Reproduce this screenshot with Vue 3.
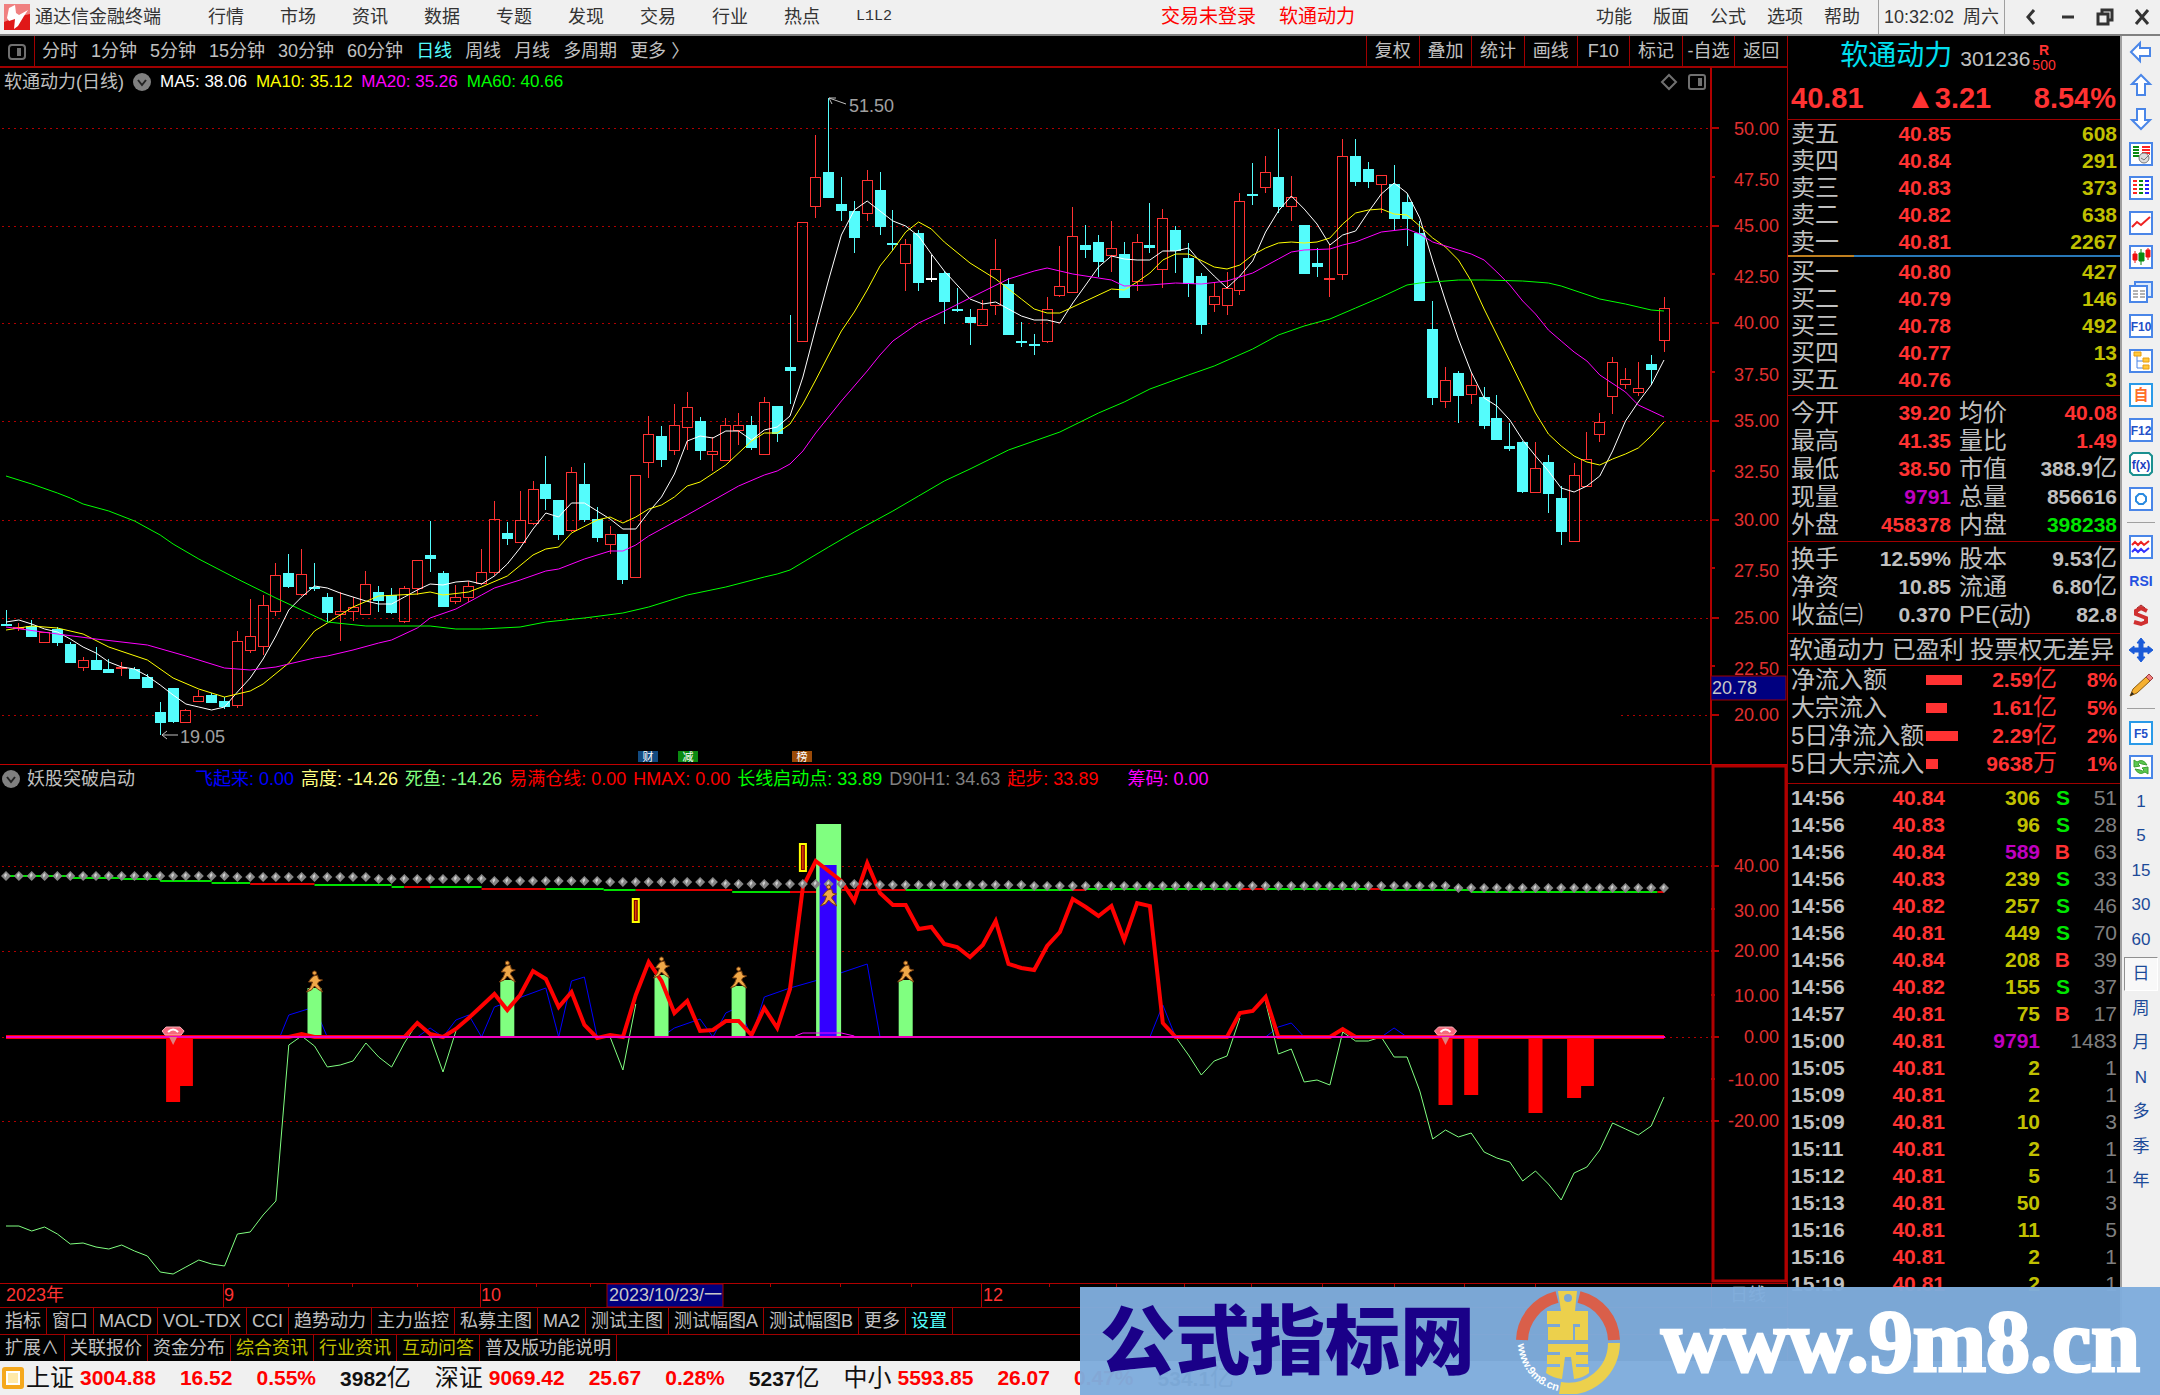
<template>
  <div class="terminal">
    <header class="titlebar">
      <svg class="brand" viewBox="0 0 26 26">
        <rect width="26" height="26" fill="#e01818" />
        <path d="M0 0H26V10L12 13L0 18Z" fill="#f08080" />
        <path d="M11 1L5 4L3 14L5 17L11 15L10 25L14 22L20 12L24 6L15 11L12 9Z" fill="#fff" />
      </svg>
      <span class="app-name">通达信金融终端</span>
      <nav class="menu">
        <button v-for="m in mainMenu" :key="m">{{ m }}</button>
        <button class="mono">L1L2</button>
      </nav>
      <div class="login"><span>交易未登录</span><span>软通动力</span></div>
      <nav class="menu tools-menu">
        <button v-for="m in toolMenu" :key="m">{{ m }}</button>
      </nav>
      <div class="clock"><span>10:32:02</span><span>周六</span></div>
      <div class="win-buttons">
        <button aria-label="back"><svg viewBox="0 0 20 20"><path d="M13 3L7 10L13 17" /></svg></button>
        <button aria-label="minimize"><svg viewBox="0 0 20 20"><path d="M4 10H16" /></svg></button>
        <button aria-label="restore"><svg viewBox="0 0 20 20"><path d="M3 7H13V17H3ZM7 7V3H17V13H13" /></svg></button>
        <button aria-label="close"><svg viewBox="0 0 20 20"><path d="M4 3L16 17M16 3L4 17" /></svg></button>
      </div>
    </header>

    <div class="body">
      <main class="charts">
        <div class="period-bar">
          <button class="panel-toggle" aria-label="panel">
            <svg viewBox="0 0 20 20"><rect x="2" y="3" width="16" height="14" rx="3" /><path d="M12 6V14" class="thick" /></svg>
          </button>
          <div class="periods">
            <button v-for="p in periods" :key="p" :class="{ active: p === '日线' }">{{ p }}</button>
          </div>
          <div class="actions">
            <button v-for="a in actions" :key="a">{{ a }}</button>
          </div>
        </div>

        <section class="pane">
          <div class="legend">
            <span class="grey">软通动力(日线)</span>
            <svg class="drop" viewBox="0 0 18 18"><circle cx="9" cy="9" r="9" /><path d="M5 7L9 12L13 7" /></svg>
            <span class="ma" v-for="m in maLegend" :key="m.text" :class="m.cls">{{ m.text }}</span>
            <div class="corner">
              <svg viewBox="0 0 20 20"><path d="M10 3L17 10L10 17L3 10Z" /></svg>
              <svg viewBox="0 0 20 20"><rect x="2" y="3" width="16" height="14" rx="2" /><path d="M13 6V14" class="thick" /></svg>
            </div>
          </div>
          <svg class="plot" viewBox="0 0 1787 697">
            <g class="grid">
              <line v-for="g in priceGrid.slice(0, 6)" :key="g" x1="2" x2="1710" :y1="py(g)" :y2="py(g)" />
              <line x1="2" x2="538" :y1="py(1422)" :y2="py(1422)" />
              <line x1="1621" x2="1710" :y1="py(1422)" :y2="py(1422)" />
            </g>
            <g class="axis">
              <path d="M1711 0V697" />
              <path v-for="g in priceGrid" :key="g" :d="`M1711 ${py(g)}h8`" />
              <path v-for="g in priceGrid.slice(1)" :key="'h' + g" :d="`M1711 ${py(g - 110)}h4`" />
            </g>
            <g class="axis-text">
              <text v-for="l in priceLabels" :key="l[0]" x="1779" :y="py(l[1]) + 6">{{ l[0] }}</text>
            </g>
            <g v-for="(c, i) in candles" :key="i" :class="['candle', c[0]]">
              <path :d="wick(c, i)" />
              <rect :x="xi(i) - 5" :y="py(c[2])" width="10" :height="Math.max(1, py(c[3]) - py(c[2]))" />
            </g>
            <polyline class="line white" :points="pts(ma5, py)" />
            <polyline class="line yellow" :points="pts(ma10, py)" />
            <polyline class="line magenta" :points="pts(ma20, py)" />
            <polyline class="line green" :points="pts(ma60, py)" />
            <g class="note">
              <path d="M829 31L846 37M829 31H836M829 31L832 37" />
              <text x="849" y="45">51.50</text>
              <path d="M162 668H178M162 668L167 664M162 668L167 672" />
              <text x="180" y="676">19.05</text>
            </g>
            <g class="tag" v-for="t in tags" :key="t.text">
              <rect :x="t.x" y="684" width="20" height="11" :fill="t.fill" />
              <text :x="t.x + 10" y="694">{{ t.text }}</text>
            </g>
            <g class="cursor">
              <rect x="1711" y="609" width="75" height="24" />
              <text x="1712" y="627">20.78</text>
            </g>
          </svg>
        </section>

        <section class="pane">
          <div class="legend sub">
            <svg class="drop" viewBox="0 0 18 18"><circle cx="9" cy="9" r="9" /><path d="M5 7L9 12L13 7" /></svg>
            <span class="light sub-name">妖股突破启动</span>
            <span v-for="s in subLegend" :key="s.text" :class="s.cls">{{ s.text }}</span>
          </div>
          <svg class="plot" viewBox="0 0 1787 518">
            <g class="grid">
              <line v-for="g in [350, 589, 829, 1064]" :key="g" x1="2" x2="1710" :y1="sy(g)" :y2="sy(g)" />
            </g>
            <g class="axis">
              <path v-for="g in [350, 589, 829, 1064]" :key="g" :d="`M1711 ${sy(g)}h8`" />
              <path v-for="g in [470, 711, 946]" :key="g" :d="`M1711 ${sy(g)}h4`" />
              <rect class="frame" x="1713" y="1" width="73" height="515" />
            </g>
            <g class="axis-text">
              <text v-for="l in subLabels" :key="l[0]" x="1779" :y="sy(l[1]) + 6">{{ l[0] }}</text>
            </g>
            <path v-for="(s, i) in trend" :key="i" :class="['trend', s[3]]" :d="`M${xi(s[0])} ${sy(s[2])}H${xi(s[1])}`" />
            <polyline v-for="(b, i) in blueRuns" :key="'b' + i" class="thin blue" :points="pts(b, sy)" />
            <polyline v-for="(g, i) in greenRuns" :key="'g' + i" class="thin lime" :points="pts(g, sy)" />
            <rect v-for="b in greenBars" :key="b[0]" :x="xi(b[0]) - b[2] / 2" :y="sy(b[1])" :width="b[2]" :height="sy(829) - sy(b[1])" fill="#80ff80" />
            <rect :x="xi(64) - 9" :y="sy(348)" width="17" :height="sy(829) - sy(348)" fill="#3300ff" />
            <polyline class="bold" :points="pts(power, sy)" />
            <rect v-for="b in redBars" :key="'r' + b[0]" :x="xi(b[0]) - 7" :y="sy(829)" width="14" :height="sy(b[1]) - sy(829)" fill="#f00" />
            <path class="base" :d="`M6 ${sy(829)}H1665`" />
            <polyline class="thin magenta" :points="pts([[61.4, 827], [62, 817], [65, 817], [66, 827]], sy)" />
            <g v-for="i in 130" :key="'d' + i" :transform="`translate(${xi(i - 1)} ${sy(pearl(i - 1))})`">
              <path d="M0 -5L5 0L0 5L-5 0Z" fill="#858585" />
              <path d="M-2 -1L0 -3L1 -1L-1 2Z" fill="#d0d0d0" />
            </g>
            <g v-for="y in yellowBars" :key="'y' + y[0]" class="bolt">
              <rect :x="xi(y[0]) - 3" :y="sy(y[1])" width="6" :height="sy(y[2]) - sy(y[1])" />
              <path :d="`M${xi(y[0])} ${sy(y[1]) + 2}V${sy(y[2]) - 2}`" />
            </g>
            <g v-for="r in runners" :key="'p' + r[0]" class="runner" :transform="`translate(${xi(r[0])} ${sy(r[1])})`">
              <circle cx="0" cy="3" r="2" />
              <path d="M-1 6L3 5L4 9L8 10L4 12L3 14L6 18L8 22L3 19L0 16L-3 20L-8 22L-4 17L-2 12L-6 12L-4 9Z" />
            </g>
            <g v-for="i in [13, 112]" :key="'m' + i" :transform="`translate(${xi(i)} ${sy(802)})`">
              <path d="M-11 4L-7 0H7L11 4L8 8H-8Z" fill="#f56a7c" stroke="#ffb0b8" />
              <path d="M-5 5Q0 0 5 5" fill="none" stroke="#fff" stroke-width="2" />
              <path d="M-4 10H4L0 18Z" fill="#e08080" />
            </g>
          </svg>
        </section>

        <svg class="plot dates" viewBox="0 0 1787 24">
          <path class="tick" d="M0 0H1787" />
          <path v-for="t in minorTicks" :key="t" class="tick" :d="`M${t} 0v4`" />
          <path v-for="t in [223, 480, 981, 1711]" :key="t" class="tick" :d="`M${t} 0v24`" />
          <text x="6" y="18">2023年</text>
          <text x="224" y="18">9</text>
          <text x="481" y="18">10</text>
          <text x="983" y="18">12</text>
          <g class="cursor">
            <rect x="607" y="1" width="116" height="23" />
            <text x="609" y="18">2023/10/23/一</text>
          </g>
          <text class="grey-text" x="1730" y="18">日线</text>
        </svg>

        <nav class="tabs">
          <button v-for="t in tabs" :key="t" :class="{ active: t === '设置' }">{{ t }}</button>
        </nav>
        <nav class="tabs">
          <button v-for="t in extTabs" :key="t" :class="{ gold: goldTabs.includes(t) }">{{ t }}</button>
        </nav>
      </main>

      <aside class="quote">
        <div class="stock">
          <h1>软通动力</h1>
          <span class="code">301236</span>
          <span class="marks"><b>R</b><i>500</i></span>
        </div>
        <div class="last"><span>40.81</span><span>▲3.21</span><span>8.54%</span></div>

        <table class="book">
          <tbody>
            <tr v-for="r in asks" :key="r[0]"><th>{{ r[0] }}</th><td class="r">{{ r[1] }}</td><td class="y">{{ r[2] }}</td></tr>
          </tbody>
        </table>
        <div class="ratio"><span></span></div>
        <table class="book bids">
          <tbody>
            <tr v-for="r in bids" :key="r[0]"><th>{{ r[0] }}</th><td class="r">{{ r[1] }}</td><td class="y">{{ r[2] }}</td></tr>
          </tbody>
        </table>

        <table class="stats" v-for="(block, n) in stats" :key="n">
          <tbody>
            <tr v-for="r in block" :key="r[0]">
              <th>{{ r[0] }}</th><td :class="r[2]">{{ r[1] }}</td>
              <th>{{ r[3] }}</th><td :class="r[5]">{{ r[4] }}<span v-if="r[6]" class="unit">{{ r[6] }}</span></td>
            </tr>
          </tbody>
        </table>

        <p class="info">软通动力 已盈利 投票权无差异</p>

        <table class="flows">
          <tbody>
            <tr v-for="f in flows" :key="f.name">
              <th>{{ f.name }}</th>
              <td class="bar-cell"><span class="bar" :style="{ width: f.bar + 'px' }"></span></td>
              <td>{{ f.value }}<span class="unit">{{ f.unit }}</span></td>
              <td>{{ f.pct }}</td>
            </tr>
          </tbody>
        </table>

        <table class="ticks">
          <tbody>
            <tr v-for="(t, i) in ticks" :key="i">
              <th>{{ t[0] }}</th>
              <td class="r">{{ t[1] }}</td>
              <td :class="t[2] === '589' || t[2] === '9791' ? 'm' : 'y'">{{ t[2] }}</td>
              <td :class="t[3] === 'S' ? 'g' : 'r'">{{ t[3] }}</td>
              <td class="n">{{ t[4] }}</td>
            </tr>
          </tbody>
        </table>
      </aside>

      <nav class="side">
        <template v-for="(s, i) in side" :key="i">
          <hr v-if="s === '-'">
          <button v-else-if="s.label" :class="{ active: s.label === '日' }">{{ s.label }}</button>
          <button v-else :aria-label="s.icon">
            <svg viewBox="0 0 24 24">
              <rect v-if="s.box" x="1" y="1" width="22" height="22" fill="#fff" :stroke="s.box" stroke-width="2" />
              <path v-for="(p, k) in s.paths" :key="k" :d="p[0]" :fill="p[1]" :stroke="p[2]" :stroke-width="p[3] || 2" />
              <text v-if="s.text" x="12" y="17" :fill="s.color" :font-size="s.size || 12">{{ s.text }}</text>
            </svg>
          </button>
        </template>
      </nav>
    </div>

    <footer class="status">
      <svg class="coin" viewBox="0 0 22 22"><rect width="22" height="22" rx="3" fill="#f5a81c" /><rect x="5" y="5" width="12" height="12" fill="#ffe9a8" stroke="#fff" stroke-width="2" /></svg>
      <div class="index" v-for="x in indexes" :key="x[0]">
        <span class="nm">{{ x[0] }}</span><b>{{ x[1] }}</b><b>{{ x[2] }}</b><b>{{ x[3] }}</b>
        <span class="amt"><strong>{{ x[4] }}</strong>亿</span>
      </div>
    </footer>

    <div class="banner">
      <span class="site-name">公式指标网</span>
      <svg class="site-logo" viewBox="0 0 104 104">
        <path d="M41 7A46 46 0 0 0 6 50" fill="none" stroke="#d95f4a" stroke-width="12" />
        <path d="M63 7A46 46 0 0 1 98 50" fill="none" stroke="#d95f4a" stroke-width="12" />
        <path d="M98 53A46 46 0 0 1 44 98" fill="none" stroke="#ecd04c" stroke-width="12" />
        <path fill-rule="evenodd" d="M42 1H61L59 21H72V50H59V37H64V34H57V50H32V37H44V34H31V21H45ZM52 4A4 4 0 1 0 52 12A4 4 0 1 0 52 4Z" fill="#ecd04c" />
        <path d="M32 54H72V62H60V65H72V74H60V77H73V83Q67 88 58 89L55 67H49L46 89Q37 88 30 83L31 77H44V74H31V65H44V62H32Z" fill="#ecd04c" />
        <path id="arc" d="M2 54A50 50 0 0 0 42 101" fill="none" />
        <text><textPath href="#arc">www.9m8.cn</textPath></text>
      </svg>
      <a href="#" class="site-url">www.9m8.cn</a>
    </div>
  </div>
</template>

<script setup>
const mainMenu = ['行情', '市场', '资讯', '数据', '专题', '发现', '交易', '行业', '热点']
const toolMenu = ['功能', '版面', '公式', '选项', '帮助']
const periods = ['分时', '1分钟', '5分钟', '15分钟', '30分钟', '60分钟', '日线', '周线', '月线', '多周期', '更多 〉']
const actions = ['复权', '叠加', '统计', '画线', 'F10', '标记', '-自选', '返回']
const tabs = ['指标', '窗口', 'MACD', 'VOL-TDX', 'CCI', '趋势动力', '主力监控', '私募主图', 'MA2', '测试主图', '测试幅图A', '测试幅图B', '更多', '设置']
const extTabs = ['扩展∧', '关联报价', '资金分布', '综合资讯', '行业资讯', '互动问答', '普及版功能说明']
const goldTabs = ['综合资讯', '行业资讯', '互动问答']

const maLegend = [
  { text: 'MA5: 38.06', cls: 'white' },
  { text: 'MA10: 35.12', cls: 'yellow' },
  { text: 'MA20: 35.26', cls: 'magenta' },
  { text: 'MA60: 40.66', cls: 'green' }
]
const subLegend = [
  { text: '飞起来: 0.00', cls: 'blue' },
  { text: '高度: -14.26', cls: 'pale' },
  { text: '死鱼: -14.26', cls: 'lime' },
  { text: '易满仓线: 0.00', cls: 'red' },
  { text: 'HMAX: 0.00', cls: 'red' },
  { text: '长线启动点: 33.89', cls: 'green' },
  { text: 'D90H1: 34.63', cls: 'dim' },
  { text: '起步: 33.89', cls: 'red' },
  { text: '筹码: 0.00', cls: 'magenta last-item' }
]

// bar index -> x, chart units -> y
const xi = i => Math.round(60 + i * 128.53) / 10
const py = v => Math.round(13 + v / 2.24)
const sy = v => Math.round(v / 2.8 - 24)
const pts = (list, y) => list.map(p => `${xi(p[0])},${y(p[1])}`).join(' ')
const wick = (c, i) => `M${xi(i)} ${py(c[1])}V${py(c[2])}M${xi(i)} ${py(c[3])}V${py(c[4])}`

const priceGrid = [108, 327, 545, 764, 985, 1204, 1422]
const priceLabels = [
  ['50.00', 110], ['47.50', 224], ['45.00', 327], ['42.50', 441], ['40.00', 545], ['37.50', 660], ['35.00', 764],
  ['32.50', 878], ['30.00', 985], ['27.50', 1100], ['25.00', 1204], ['22.50', 1320], ['20.00', 1423]
]
const subLabels = [['40.00', 350], ['30.00', 475], ['20.00', 589], ['10.00', 715], ['0.00', 829], ['-10.00', 950], ['-20.00', 1064]]
const minorTicks = [288, 352, 417, 536, 590, 770, 840, 911, 1049, 1116, 1184, 1251, 1322, 1394, 1464, 1535]
const tags = [
  { x: 638, text: '财', fill: '#124a80' },
  { x: 678, text: '减', fill: '#0a8a10' },
  { x: 792, text: '榜', fill: '#9a4a08' }
]

// type, high, body top, body bottom, low
const candles = [
  ['d', 1188, 1219, 1221, 1221], ['u', 1216, 1226, 1228, 1235], ['d', 1209, 1224, 1246, 1246], ['u', 1236, 1236, 1258, 1258],
  ['d', 1226, 1229, 1258, 1268], ['d', 1258, 1263, 1303, 1303], ['u', 1292, 1300, 1315, 1323], ['d', 1269, 1300, 1319, 1319],
  ['d', 1296, 1320, 1326, 1326], ['u', 1303, 1315, 1317, 1336], ['d', 1314, 1319, 1340, 1342], ['d', 1330, 1337, 1360, 1360],
  ['d', 1394, 1416, 1437, 1468], ['d', 1362, 1362, 1436, 1440], ['u', 1408, 1411, 1439, 1440], ['u', 1366, 1379, 1392, 1392],
  ['d', 1374, 1377, 1393, 1396], ['d', 1382, 1390, 1403, 1409], ['u', 1235, 1257, 1399, 1407], ['u', 1162, 1246, 1276, 1283],
  ['u', 1154, 1177, 1268, 1289], ['u', 1081, 1109, 1190, 1201], ['d', 1061, 1105, 1134, 1138], ['u', 1051, 1106, 1151, 1156],
  ['d', 1081, 1135, 1138, 1145], ['d', 1150, 1158, 1191, 1214], ['u', 1146, 1190, 1196, 1256], ['u', 1158, 1181, 1190, 1212],
  ['u', 1099, 1129, 1197, 1198], ['d', 1134, 1146, 1165, 1191], ['d', 1139, 1154, 1191, 1197], ['u', 1133, 1137, 1211, 1216],
  ['u', 1076, 1076, 1139, 1153], ['d', 988, 1065, 1070, 1101], ['d', 1099, 1105, 1178, 1178], ['u', 1132, 1159, 1168, 1174],
  ['u', 1123, 1133, 1158, 1169], ['u', 1051, 1102, 1126, 1131], ['u', 944, 984, 1102, 1111], ['d', 990, 1014, 1026, 1041],
  ['u', 920, 985, 1035, 1036], ['u', 899, 917, 992, 997], ['d', 842, 906, 936, 963], ['d', 940, 940, 1017, 1030],
  ['u', 867, 877, 1009, 1013], ['d', 857, 904, 984, 990], ['d', 957, 983, 1023, 1036], ['u', 998, 1016, 1039, 1062],
  ['d', 1018, 1018, 1118, 1128], ['u', 884, 884, 1113, 1115], ['u', 752, 794, 855, 892], ['d', 775, 798, 849, 868],
  ['u', 725, 772, 828, 841], ['u', 699, 733, 777, 829], ['d', 756, 763, 829, 852], ['u', 800, 830, 837, 876],
  ['u', 758, 773, 851, 852], ['u', 745, 773, 783, 818], ['d', 752, 772, 822, 829], ['u', 709, 722, 837, 841],
  ['d', 731, 731, 791, 811], ['d', 527, 642, 650, 725], ['u', 319, 319, 585, 587], ['u', 124, 218, 283, 310],
  ['d', 40, 207, 261, 261], ['d', 218, 278, 291, 315], ['d', 272, 294, 352, 388], ['u', 201, 225, 297, 315],
  ['d', 205, 247, 328, 347], ['d', 291, 365, 367, 380], ['u', 356, 367, 411, 472], ['d', 335, 342, 452, 472],
  ['w', 392, 443, 445, 452], ['d', 427, 433, 496, 546], ['d', 466, 513, 515, 519], ['d', 514, 531, 543, 594],
  ['u', 493, 512, 549, 549], ['u', 356, 424, 503, 526], ['d', 444, 457, 570, 570], ['d', 543, 584, 586, 597],
  ['d', 568, 591, 593, 616], ['u', 487, 512, 585, 589], ['u', 372, 461, 481, 487], ['u', 285, 350, 475, 475],
  ['d', 325, 370, 378, 399], ['d', 348, 363, 405, 442], ['u', 315, 377, 393, 431], ['d', 362, 390, 486, 489],
  ['u', 345, 364, 450, 472], ['d', 275, 369, 373, 388], ['u', 289, 309, 424, 465], ['d', 326, 335, 381, 432],
  ['d', 365, 399, 454, 486], ['d', 432, 439, 547, 570], ['u', 453, 484, 501, 519], ['u', 429, 467, 505, 526],
  ['u', 254, 272, 471, 482], ['d', 187, 255, 257, 280], ['u', 170, 205, 239, 253], ['d', 110, 218, 283, 298],
  ['u', 214, 262, 283, 315], ['d', 325, 325, 433, 433], ['d', 377, 411, 417, 442], ['u', 370, 443, 445, 486],
  ['u', 133, 171, 434, 448], ['d', 133, 170, 227, 237], ['d', 184, 200, 227, 243], ['u', 212, 212, 233, 297],
  ['d', 190, 234, 308, 336], ['d', 255, 273, 308, 372], ['d', 315, 342, 493, 493], ['d', 496, 557, 711, 728],
  ['u', 642, 672, 720, 735], ['d', 652, 657, 705, 768], ['u', 656, 683, 704, 725], ['d', 688, 711, 772, 781],
  ['d', 705, 758, 805, 805], ['d', 768, 820, 824, 831], ['d', 809, 812, 920, 926], ['u', 810, 870, 922, 922],
  ['d', 839, 856, 926, 970], ['d', 910, 937, 1010, 1041], ['u', 857, 885, 1032, 1033], ['u', 788, 848, 909, 910],
  ['u', 745, 766, 794, 812], ['u', 620, 632, 707, 748], ['u', 645, 670, 681, 693], ['u', 631, 689, 700, 707],
  ['d', 617, 637, 647, 683], ['u', 486, 510, 582, 610]
]

const ma5 = [
  1213, 1210, 1218, 1230, 1236, 1252, 1270, 1284, 1303, 1314, 1320, 1335, 1355, 1378, 1398, 1405, 1411, 1405, 1370, 1340,
  1298, 1245, 1188, 1158, 1133, 1137, 1149, 1158, 1166, 1173, 1173, 1159, 1142, 1130, 1132, 1125, 1122, 1128, 1112, 1085,
  1048, 1005, 970, 978, 948, 947, 966, 983, 1005, 1005, 967, 935, 882, 808, 797, 803, 787, 787, 806, 784,
  777, 753, 665, 555, 447, 348, 291, 271, 293, 315, 328, 349, 390, 428, 459, 490, 501, 497, 514, 528,
  538, 538, 545, 500, 460, 418, 394, 401, 403, 403, 383, 383, 377, 410, 438, 466, 440, 405, 340, 293,
  260, 290, 322, 370, 347, 338, 295, 256, 231, 253, 310, 405, 495, 580, 655, 712, 730, 762, 806, 842,
  875, 913, 924, 910, 888, 830, 763, 722, 683, 628
].map((v, i) => [i, v])

const ma10 = [
  [0, 1233], [1, 1228], [2, 1224], [4, 1227], [6, 1240], [8, 1269], [11, 1300], [13, 1340], [15, 1365], [17, 1382], [19, 1368],
  [20, 1352], [22, 1307], [24, 1234], [25, 1216], [27, 1180], [29, 1156], [32, 1152], [33, 1147], [34, 1154], [36, 1146],
  [37, 1136], [39, 1110], [41, 1065], [42, 1050], [43, 1045], [44, 1015], [46, 985], [47, 979], [48, 992], [49, 979], [50, 960],
  [51, 951], [52, 935], [53, 909], [54, 900], [56, 862], [58, 808], [59, 790], [60, 790], [61, 770], [62, 725], [63, 672],
  [64, 617], [65, 563], [66, 520], [67, 470], [68, 417], [69, 380], [70, 341], [71, 319], [72, 333], [73, 362], [75, 410],
  [77, 446], [78, 468], [79, 490], [80, 514], [81, 521], [82, 521], [84, 495], [86, 468], [87, 470], [88, 452], [89, 433],
  [90, 403], [91, 390], [92, 390], [94, 418], [95, 424], [96, 415], [97, 393], [98, 377], [99, 366], [100, 364], [101, 366],
  [102, 364], [103, 354], [104, 322], [105, 298], [106, 292], [107, 290], [108, 300], [109, 303], [110, 327], [111, 355],
  [112, 374], [113, 403], [114, 450], [115, 513], [117, 630], [119, 747], [120, 793], [121, 820], [122, 842], [123, 856],
  [124, 862], [125, 850], [126, 838], [127, 824], [128, 798], [129, 765]
]

const ma20 = [
  [0, 1226], [4, 1242], [7, 1253], [11, 1265], [14, 1290], [17, 1318], [19, 1321], [21, 1314], [24, 1295], [25, 1291],
  [27, 1277], [29, 1262], [30, 1254], [32, 1227], [33, 1206], [35, 1184], [37, 1154], [38, 1138], [40, 1120], [42, 1099],
  [43, 1096], [45, 1074], [47, 1056], [48, 1055], [49, 1042], [50, 1022], [53, 974], [57, 909], [59, 885], [60, 875], [61, 860],
  [62, 830], [63, 790], [65, 720], [67, 652], [68, 615], [69, 585], [71, 544], [73, 517], [75, 488], [78, 445], [80, 428],
  [81, 421], [83, 434], [85, 443], [86, 448], [87, 461], [89, 459], [91, 454], [93, 457], [95, 451], [97, 433], [99, 402],
  [100, 386], [101, 380], [103, 379], [104, 370], [105, 362], [107, 340], [109, 333], [110, 345], [111, 362], [113, 381],
  [114, 390], [115, 404], [116, 430], [117, 460], [118, 495], [119, 525], [120, 560], [121, 585], [122, 610], [123, 630],
  [124, 660], [126, 700], [127, 727], [128, 742], [129, 754]
]

const ma60 = [
  [0, 888], [2, 905], [4, 926], [5, 936], [6, 949], [8, 966], [10, 987], [12, 1020], [13, 1040], [15, 1074], [18, 1118],
  [21, 1160], [23, 1187], [25, 1213], [28, 1223], [33, 1223], [35, 1229], [37, 1230], [40, 1225], [42, 1213], [45, 1205],
  [48, 1193], [50, 1180], [53, 1154], [56, 1135], [59, 1114], [60, 1106], [61, 1098], [64, 1045], [66, 1012], [69, 965],
  [71, 932], [73, 898], [75, 871], [78, 828], [80, 808], [82, 788], [85, 745], [87, 722], [89, 693], [92, 661], [94, 640],
  [97, 602], [99, 571], [101, 551], [103, 535], [105, 510], [107, 485], [109, 460], [110, 454], [111, 452], [113, 449],
  [115, 447], [118, 450], [120, 455], [121, 461], [124, 490], [126, 502], [128, 515], [129, 517]
]

// lower pane
const power = [
  [0, 829], [22, 829], [23, 821], [24, 829], [31, 829], [32, 790], [33, 820], [34, 829], [35, 805], [36, 775], [37, 742],
  [38, 708], [39, 754], [40, 712], [41, 643], [42, 667], [43, 745], [44, 702], [45, 795], [46, 831], [47, 824], [48, 829],
  [49, 710], [50, 620], [51, 672], [52, 762], [53, 727], [54, 811], [55, 808], [56, 783], [57, 783], [58, 824], [59, 747],
  [60, 803], [61, 693], [62, 410], [63, 337], [64, 365], [65, 392], [66, 448], [67, 341], [68, 425], [69, 460], [70, 460],
  [71, 526], [72, 521], [73, 567], [74, 577], [75, 605], [76, 570], [77, 505], [78, 625], [79, 636], [80, 641], [81, 573],
  [82, 534], [83, 441], [84, 466], [85, 490], [86, 462], [87, 557], [88, 454], [89, 461], [90, 790], [91, 829], [95, 829],
  [96, 762], [97, 757], [98, 718], [99, 829], [103, 829], [104, 806], [105, 829], [129, 829]
]

const greenRuns = [
  [
    [0, 1358], [1, 1358], [2, 1371], [3, 1361], [4, 1380], [5, 1409], [6, 1405], [7, 1417], [8, 1421], [9, 1412], [10, 1428],
    [11, 1442], [12, 1487], [13, 1492], [14, 1474], [15, 1454], [16, 1463], [17, 1471], [18, 1380], [19, 1375], [20, 1328],
    [21, 1288], [22, 852], [23, 825], [24, 855], [25, 914], [26, 908], [27, 897], [28, 845], [29, 885], [30, 913], [31, 845],
    [32, 790], [33, 825], [34, 927], [35, 813]
  ],
  [[47, 829], [48, 922], [49, 735]],
  [[91, 829], [92, 878], [93, 935], [94, 895], [95, 883], [96, 775]],
  [
    [98, 730], [99, 875], [100, 862], [101, 956], [102, 950], [103, 964], [104, 815], [105, 841], [106, 841], [107, 830],
    [108, 884], [109, 884], [110, 980], [111, 1113], [112, 1090], [113, 1110], [114, 1097], [115, 1151], [116, 1167],
    [117, 1178], [118, 1232], [119, 1203], [120, 1240], [121, 1286], [122, 1210], [123, 1192], [124, 1145], [125, 1070],
    [126, 1087], [127, 1103], [128, 1078], [129, 998]
  ]
]

const blueRuns = [
  [[21.3, 829], [22, 767], [24, 745], [25, 829]],
  [[32, 829], [33, 804], [34, 829], [35, 780], [36, 766], [37, 829], [38, 745], [42, 692], [43, 829], [44, 673], [45, 660], [46, 829]],
  [[51, 829], [52, 803], [54, 778], [55, 829], [56, 762], [57, 744], [58, 829], [59, 718], [61, 692], [64, 660], [67, 623], [68, 829]],
  [[89, 829], [90, 740], [91, 829]],
  [[98, 829], [99, 802], [100, 790], [101, 829]],
  [[107, 829], [108, 803], [109, 829]]
]

const trend = [
  [0, 5, 379, 'green'], [5, 9, 384, 'green'], [9, 12, 387, 'green'], [12, 16, 392, 'green'], [16, 19, 397, 'green'],
  [19, 24, 401, 'red'], [24, 30, 404, 'green'], [30, 31, 408, 'green'], [31, 33, 408, 'red'], [33, 37, 408, 'green'],
  [37, 42, 413, 'red'], [42, 46.5, 413, 'green'], [46.5, 49, 417, 'green'], [49, 56.5, 417, 'red'], [56.5, 61, 422, 'green'],
  [61, 65, 422, 'red'], [65, 70, 416, 'red'], [70, 83, 417, 'green'], [83, 84, 417, 'red'], [84, 96, 413, 'green'],
  [96, 98, 413, 'red'], [98, 106, 413, 'green'], [106, 107, 413, 'red'], [107, 114, 417, 'green'], [114, 128.5, 422, 'green'],
  [128.5, 129, 422, 'red']
]
const pearlSteps = [[18, 377], [29, 381], [38, 386], [47, 391], [56, 394], [68, 399], [80, 403], [113, 407], [130, 411]]
const pearl = i => pearlSteps.find(s => i < s[0])[1]

const greenBars = [[24, 692, 14], [39, 668, 14], [51, 655, 14], [57, 686, 14], [64, 231, 25], [70, 668, 14]]
const redBars = [[13, 1011], [14, 965], [112, 1020], [114, 990], [119, 1041], [122, 999], [123, 965]]
const yellowBars = [[49, 441, 508], [62, 288, 364]]
const runners = [[24, 640], [39, 613], [51, 602], [57, 630], [64, 400], [70, 613]]

// quote panel
const asks = [['卖五', '40.85', '608'], ['卖四', '40.84', '291'], ['卖三', '40.83', '373'], ['卖二', '40.82', '638'], ['卖一', '40.81', '2267']]
const bids = [['买一', '40.80', '427'], ['买二', '40.79', '146'], ['买三', '40.78', '492'], ['买四', '40.77', '13'], ['买五', '40.76', '3']]
const stats = [
  [
    ['今开', '39.20', 'r', '均价', '40.08', 'r'],
    ['最高', '41.35', 'r', '量比', '1.49', 'r'],
    ['最低', '38.50', 'r', '市值', '388.9', 'w', '亿'],
    ['现量', '9791', 'm', '总量', '856616', 'w'],
    ['外盘', '458378', 'r', '内盘', '398238', 'g']
  ],
  [
    ['换手', '12.59%', 'w', '股本', '9.53', 'w', '亿'],
    ['净资', '10.85', 'w', '流通', '6.80', 'w', '亿'],
    ['收益㈢', '0.370', 'w', 'PE(动)', '82.8', 'w']
  ]
]
const flows = [
  { name: '净流入额', bar: 36, value: '2.59', unit: '亿', pct: '8%' },
  { name: '大宗流入', bar: 21, value: '1.61', unit: '亿', pct: '5%' },
  { name: '5日净流入额', bar: 32, value: '2.29', unit: '亿', pct: '2%' },
  { name: '5日大宗流入', bar: 12, value: '9638', unit: '万', pct: '1%' }
]
const ticks = [
  ['14:56', '40.84', '306', 'S', '51'], ['14:56', '40.83', '96', 'S', '28'], ['14:56', '40.84', '589', 'B', '63'],
  ['14:56', '40.83', '239', 'S', '33'], ['14:56', '40.82', '257', 'S', '46'], ['14:56', '40.81', '449', 'S', '70'],
  ['14:56', '40.84', '208', 'B', '39'], ['14:56', '40.82', '155', 'S', '37'], ['14:57', '40.81', '75', 'B', '17'],
  ['15:00', '40.81', '9791', '', '1483'], ['15:05', '40.81', '2', '', '1'], ['15:09', '40.81', '2', '', '1'],
  ['15:09', '40.81', '10', '', '3'], ['15:11', '40.81', '2', '', '1'], ['15:12', '40.81', '5', '', '1'],
  ['15:13', '40.81', '50', '', '3'], ['15:16', '40.81', '11', '', '5'], ['15:16', '40.81', '2', '', '1'],
  ['15:19', '40.81', '2', '', '1']
]
const indexes = [
  ['上证', '3004.88', '16.52', '0.55%', '3982'],
  ['深证', '9069.42', '25.67', '0.28%', '5237'],
  ['中小', '5593.85', '26.07', '0.47%', '534.1']
]

const blue = '#4a86e8'
const side = [
  { icon: 'left', paths: [['M2 12L11 3V8H21V16H11V21Z', '#fff', blue]] },
  { icon: 'up', paths: [['M12 2L21 11H16V22H8V11H3Z', '#fff', blue]] },
  { icon: 'down', paths: [['M12 22L21 13H16V2H8V13H3Z', '#fff', blue]] },
  { icon: 'report', box: blue, paths: [['M4 5H10M4 8H10M4 11H10M4 14H10', 'none', '#0a8a10'], ['M13 5H21M13 8H21M13 11H21', 'none', '#f22'], ['M10 16A5 5 0 1 0 20 16A5 5 0 1 0 10 16M12 16L15 18L21 12', '#ddd', '#777', 1]] },
  { icon: 'list', box: blue, paths: [['M4 5H8M4 9H8M4 13H8M4 17H8', 'none', '#f22'], ['M10 5H14M10 9H14M10 13H14M10 17H14', 'none', '#0a8a10'], ['M16 5H20M16 9H20M16 13H20M16 17H20', 'none', '#22f']] },
  { icon: 'minute', box: blue, paths: [['M3 16L8 11L12 14L21 6', 'none', '#e22']] },
  { icon: 'kline', box: blue, paths: [['M4 9H8V15H4ZM6 6V18M17 5H21V12H17ZM19 3V15', '#e11', '#e11', 1], ['M10 8H15V16H10ZM12 4V20', '#0a8a10', '#0a8a10', 1]] },
  { icon: 'pages', paths: [['M6 2H23V17H6Z', '#dceafc', blue], ['M1 6H18V22H1Z', '#fff', blue], ['M4 11H9M4 14H9M4 17H9M11 11H16M11 14H16M11 17H16', 'none', '#666', 1]] },
  { icon: 'f10', box: blue, text: 'F10', color: '#2450c8' },
  { icon: 'tree', box: blue, paths: [['M8 6V19H14M8 12H14', 'none', blue, 1], ['M5 3H12V7H5ZM14 9H20V13H14ZM14 16H20V20H14Z', '#ffc83c', '#e8a010', 1]] },
  { icon: 'self', box: '#2a9ae8', text: '自', color: '#ff7028', size: 15 },
  { icon: 'f12', box: blue, text: 'F12', color: '#2450c8' },
  { icon: 'formula', paths: [['M4 1H20L23 4V20L20 23H4L1 20V4Z', '#fff', '#1a9090']], text: 'f(x)', color: '#2040c0' },
  { icon: 'cycle', box: blue, paths: [['M10 7H14L17 10V14L14 17H10L7 14V10Z', 'none', '#2a8ae0']] },
  '-',
  { icon: 'waves', box: blue, paths: [['M3 10L6 7L9 10L12 7L15 10L20 6', 'none', '#e22'], ['M3 17L6 14L9 17L12 14L15 17L20 13', 'none', '#33f']] },
  { icon: 'rsi', paths: [], text: 'RSI', color: '#2450e0', size: 14 },
  { icon: 'money', paths: [['M18 7L12 4L7 7V10L17 14V18L12 20L5 18', 'none', '#d03030', 4], ['M8 4L12 1L16 4', 'none', '#a02020', 1]] },
  { icon: 'move', paths: [['M12 0L16 5H14V10H19V8L24 12L19 16V14H14V19H16L12 24L8 19H10V14H5V16L0 12L5 8V10H10V5H8Z', '#1a5ad8', '#1a5ad8', 1]] },
  { icon: 'pencil', paths: [['M1 23L4 16L17 4L21 8L8 20Z', '#f5b030', '#8a5a10', 1], ['M17 4L20 1L24 5L21 8Z', '#f08080', '#a04040', 1], ['M1 23L3 19L5 21Z', '#222', 'none']] },
  '-',
  { icon: 'f5', box: '#2a9ae8', text: 'F5', color: '#2450c8' },
  { icon: 'refresh', box: blue, paths: [['M5 12L5 5L8 7Q14 3 18 10L13 9Q10 7 9 9L11 11Z', '#5cc850', '#3aa030', 1], ['M19 12V19L16 17Q10 21 6 14L11 15Q14 17 15 15L13 13Z', '#5cc850', '#3aa030', 1]] },
  ...['1', '5', '15', '30', '60', '日', '周', '月', 'N', '多', '季', '年'].map(label => ({ label }))
]
</script>

<style>
body {
  background: #000;
}
</style>

<style scoped>
.terminal {
  position: relative;
  min-height: 100vh;
  display: flex;
  flex-direction: column;
  overflow: hidden;
  background: #000;
  color: #c0c0c0;
  font-family: "Liberation Sans", "Noto Sans CJK SC", sans-serif;
  font-size: 18px;
  line-height: 24px;
}

button {
  padding: 0;
  border: 0;
  background: none;
  color: inherit;
  font: inherit;
  white-space: nowrap;
  cursor: pointer;
}

/* title bar */
.titlebar {
  display: flex;
  align-items: center;
  height: 36px;
  box-sizing: border-box;
  padding: 0 8px 0 4px;
  border-bottom: 2px solid #808080;
  background: #f0f0f0;
  color: #333;
  white-space: nowrap;
}

.brand { width: 26px; height: 26px; margin-right: 5px; }
.app-name { margin-right: 47px; }
.menu { display: flex; gap: 36px; }
.mono { font-family: "Liberation Mono", monospace; font-size: 15px; }
.menu .mono { font-size: 15px; }

.login {
  display: flex;
  gap: 23px;
  flex: 1;
  justify-content: center;
  padding-left: 28px;
  color: #f00;
  font-size: 19px;
}

.tools-menu { gap: 21px; }

.clock {
  display: flex;
  gap: 9px;
  margin-left: 18px;
  padding: 5px;
  border-left: 1px solid #a0a0a0;
  border-right: 1px solid #a0a0a0;
}

.win-buttons { display: flex; gap: 17px; margin-left: 16px; }
.win-buttons svg { display: block; width: 20px; height: 20px; fill: none; stroke: #333; stroke-width: 3; }

.body {
  flex: 1;
  display: grid;
  grid-template-columns: 1fr 335px 38px;
}

/* period bar */
.charts { min-width: 0; }

.period-bar {
  display: flex;
  height: 32px;
  box-sizing: border-box;
  border-bottom: 2px solid #a00000;
}

.panel-toggle { width: 35px; border-right: 1px solid #a00000; }
.panel-toggle svg, .corner svg { width: 20px; height: 20px; fill: none; stroke: #707070; stroke-width: 2; vertical-align: middle; }
.thick { stroke-width: 4; }
.periods { display: flex; gap: 13px; margin-left: 7px; }
.active { color: #54fcfc; }

.actions {
  display: grid;
  grid-template-columns: repeat(8, 1fr);
  width: 421px;
  margin-left: auto;
}

.actions button { border-left: 1px solid #a00000; }

/* charts */
.pane { position: relative; margin-top: -1px; border-bottom: 1px solid #c00000; }
.pane + .pane { margin-top: 0; border-bottom: 0; }

.legend {
  position: absolute;
  inset: 3px 0 auto 0;
  display: flex;
  align-items: center;
  gap: 9px;
  padding-left: 4px;
  white-space: nowrap;
}

.legend.sub { gap: 7px; top: 2px; padding-left: 2px; }
.drop { width: 18px; height: 18px; fill: #808080; }
.drop path { fill: none; stroke: #222; stroke-width: 2; }
.ma { font-size: 17px; }
.sub-name { margin-right: 53px; }
.last-item { margin-left: 22px; }
.corner { display: flex; gap: 8px; margin-left: auto; margin-right: 80px; }
.plot { display: block; width: 100%; height: auto; }

.grid line { stroke: #b00000; stroke-dasharray: 2 4; shape-rendering: crispEdges; }
.axis path { stroke: #b00000; stroke-width: 2; shape-rendering: crispEdges; }
.frame { fill: none; stroke: #b00000; stroke-width: 3; }
.axis-text text { fill: #e03030; text-anchor: end; }

.candle { shape-rendering: crispEdges; }
.candle.u { stroke: #ff3232; fill: none; }
.candle.d { stroke: #54fcfc; fill: #54fcfc; }
.candle.w { stroke: #fff; fill: #fff; }

.line, .thin { fill: none; stroke-width: 1; }
.line.white { stroke: #fff; }
.line.yellow { stroke: #ff0; }
.line.green { stroke: #0f0; }
.line.magenta, .thin.magenta { stroke: #f0f; }
.thin.lime { stroke: #80ff80; }
.thin.blue { stroke: #00f; }
.bold { fill: none; stroke: #f00; stroke-width: 4; }
.base { stroke: #f000c0; stroke-width: 2; }
.trend { stroke-width: 2; }
.trend.red { stroke: #e00000; }
.trend.green { stroke: #00e000; }
.bolt rect { fill: #800; stroke: #ff0; stroke-width: 2; }
.bolt path { stroke: #f60; stroke-width: 1; }
.runner { fill: #f0a848; stroke: #7a4010; stroke-width: 1; }

.note text { fill: #a0a0a0; }
.note path { fill: none; stroke: #c0c0c0; }
.tag text { fill: #fff; font-size: 11px; text-anchor: middle; }
.cursor rect { fill: #000080; stroke: #a00000; }
.cursor text { fill: #c8c8c8; }
.dates .tick { stroke: #b00000; shape-rendering: crispEdges; }
.dates text { fill: #ff3232; }
.dates .cursor text { fill: #c8c8c8; }
.dates .grey-text { fill: #c0c0c0; }

.white { color: #fff; }
.yellow { color: #ff0; }
.pale { color: #ffff80; }
.magenta { color: #f0f; }
.green { color: #0f0; }
.lime { color: #80ff80; }
.red { color: #f00; }
.blue { color: #00f; }
.dim { color: #808080; }

/* tabs under the charts */
.tabs { display: flex; height: 26px; border-top: 1px solid #a00000; }
.tabs button { padding: 0 5px; border-right: 1px solid #a00000; }
.tabs .gold { color: #c0c000; }

/* quote panel */
.quote {
  box-sizing: border-box;
  overflow: hidden;
  border-left: 1px solid #a00000;
  border-right: 2px solid #a0a0a0;
  font-size: 21px;
  line-height: 26px;
}

.stock {
  display: flex;
  justify-content: center;
  align-items: center;
  height: 40px;
  padding-right: 12px;
}

.stock h1 { margin: 0 8px 0 0; color: #00e0f0; font-size: 28px; font-weight: 400; }
.code { padding-top: 6px; }
.marks { display: grid; padding: 4px 0 0 2px; color: #ff3232; font-size: 14px; line-height: 15px; text-align: center; }
.marks i { font-style: normal; }

.last {
  display: flex;
  justify-content: space-between;
  height: 43px;
  padding: 0 4px 0 3px;
  color: #ff3232;
  font-size: 29px;
  font-weight: 700;
  line-height: 44px;
}

table {
  width: 100%;
  border-collapse: separate;
  border-spacing: 0;
  table-layout: fixed;
  border-top: 1px solid #a00000;
}

th, td { height: 27px; padding: 0; white-space: nowrap; line-height: 27px; }
th { text-align: left; font-size: 24px; font-weight: 400; padding-left: 3px; }
td { text-align: right; font-weight: 700; }
.unit { font-size: 24px; font-weight: 400; line-height: 24px; }
.r { color: #ff3232; }
.y { color: #c0c000; }
.m { color: #c000c0; }
.g { color: #00e600; }
.w { color: #c0c0c0; }

.book th { width: 80px; }
.book td:nth-child(2) { width: 80px; }
.book td:last-child { padding-right: 3px; }
.ratio { height: 2px; background: #2878b8; }
.ratio span { display: block; width: 20%; height: 2px; background: #c08020; }
.bids { border-top: 0; padding: 1px 0 2px; }

.stats { padding: 3px 0 2px; }
.stats + .stats { padding-bottom: 4px; }
.stats th, .stats td, .flows th, .flows td { height: 28px; line-height: 28px; }
.stats th { width: 77px; }
.stats td { width: 83px; }
.stats th:nth-child(3) { width: 68px; padding-left: 8px; }
.stats td:last-child { width: auto; padding-right: 3px; }

.info {
  height: 31px;
  margin: 0;
  padding-left: 1px;
  border-top: 1px solid #a00000;
  font-size: 24px;
  line-height: 32px;
  white-space: nowrap;
}

.flows { padding-bottom: 5px; }
.flows td { color: #ff3232; width: 62px; }
.flows td:nth-child(3) { width: 93px; }
.flows .bar-cell { width: 38px; text-align: left; }
.flows th { width: 135px; }
.flows td:last-child { width: auto; padding-right: 3px; }
.bar { display: block; height: 10px; background: #ff3232; }

.ticks th { font-size: 21px; font-weight: 700; width: 72px; }
.ticks td:nth-child(2) { width: 82px; }
.ticks td:nth-child(3) { width: 95px; }
.ticks td:nth-child(4) { width: 30px; }
.ticks .n { color: #808080; font-weight: 400; padding-right: 3px; }

/* side toolbar */
.side {
  display: flex;
  flex-direction: column;
  background: #f0f0f0;
  color: #1c4a98;
  font-size: 17px;
}

.side button { height: 34px; border: 1px solid transparent; flex: none; box-sizing: border-box; }
.side button:nth-child(even) { height: 35px; }
.side button:first-child { height: 31px; }
.side svg { display: block; width: 24px; height: 24px; margin: 0 auto; }
.side text { text-anchor: middle; font-weight: 700; }
.side hr { width: 28px; height: 1px; margin: 6px auto; border: 0; background: #a0a0a0; }
.side .active { margin: 0 2px; border-color: #909090 #fff #fff #909090; background: #f8f8f8; color: #1c4a98; }

/* index strip */
.status {
  display: flex;
  align-items: center;
  height: 34px;
  border-bottom: 1px solid #203850;
  background: #f0f0f0;
  color: #111;
  font-size: 21px;
  white-space: nowrap;
}

.coin { width: 22px; height: 22px; margin: 0 2px; }
.index { display: flex; align-items: center; gap: 24px; margin-right: 24px; }
.index b { color: #f00; }
.nm { margin-right: -18px; font-size: 24px; }
.amt { font-size: 24px; }
.amt strong { font-size: 21px; }

.banner {
  position: absolute;
  right: 0;
  bottom: 0;
  display: flex;
  align-items: center;
  justify-content: space-between;
  box-sizing: border-box;
  width: 50%;
  height: 109px;
  padding: 0 20px;
  overflow: hidden;
  background: rgba(127, 172, 220, 0.97);
  white-space: nowrap;
}

.site-name { color: #1a0088; font-size: 75px; font-weight: 900; line-height: 100px; }
.site-logo { width: 104px; height: 104px; }
.site-logo text { fill: #fff; font-size: 11px; font-weight: 700; }
.site-url {
  color: #fff;
  font-family: "Liberation Serif", serif;
  font-size: 88px;
  font-weight: 700;
  line-height: 100px;
  text-decoration: none;
  -webkit-text-stroke: 3px #fff;
}
</style>
